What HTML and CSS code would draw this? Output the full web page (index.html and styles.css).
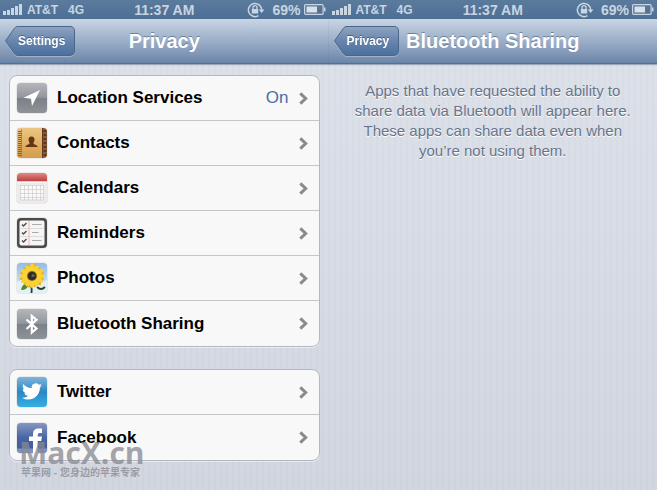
FILE: index.html
```html
<!DOCTYPE html>
<html lang="en">

<head>
  <meta charset="UTF-8">
  <meta name="viewport" content="width=device-width, initial-scale=1">
  <title>Privacy</title>
  <link rel="stylesheet" href="styles.css">
</head>

<body>
  <!-- shared symbols -->
  <svg class="defs" width="0" height="0" aria-hidden="true">
    <defs>
      <linearGradient id="steel" x1="0" y1="0" x2="0" y2="1">
        <stop offset="0" stop-color="#b4b7bb"/>
        <stop offset="0.48" stop-color="#92959b"/>
        <stop offset="0.52" stop-color="#7c8087"/>
        <stop offset="1" stop-color="#8e9299"/>
      </linearGradient>
      <linearGradient id="tan" x1="0" y1="0" x2="0" y2="1">
        <stop offset="0" stop-color="#ecc582"/>
        <stop offset="1" stop-color="#d59c4a"/>
      </linearGradient>
      <linearGradient id="red" x1="0" y1="0" x2="0" y2="1">
        <stop offset="0" stop-color="#e08a86"/>
        <stop offset="1" stop-color="#bd3a3b"/>
      </linearGradient>
      <linearGradient id="sky" x1="0" y1="0" x2="0" y2="1">
        <stop offset="0" stop-color="#8fbdec"/>
        <stop offset="1" stop-color="#e3eff8"/>
      </linearGradient>
      <linearGradient id="tw" x1="0" y1="0" x2="0" y2="1">
        <stop offset="0" stop-color="#7fb4dc"/>
        <stop offset="0.5" stop-color="#2c87c4"/>
        <stop offset="1" stop-color="#35b0e6"/>
      </linearGradient>
      <linearGradient id="fb" x1="0" y1="0" x2="0" y2="1">
        <stop offset="0" stop-color="#8496c2"/>
        <stop offset="0.5" stop-color="#4964a3"/>
        <stop offset="1" stop-color="#3f5a9c"/>
      </linearGradient>
      <linearGradient id="cap" x1="0" y1="0" x2="0" y2="1">
        <stop offset="0" stop-color="#8ea4c1"/>
        <stop offset="0.5" stop-color="#6885ad"/>
        <stop offset="1" stop-color="#4a719f"/>
      </linearGradient>
    </defs>
    <symbol id="signal" viewBox="0 0 20 11">
      <path d="M0 7h3v4H0zM4 6h3v5H4zM8 4h3v7H8zM12 2h3v9h-3zM16 0h3v11h-3z" fill="#c9d5e1"/>
    </symbol>
    <symbol id="lock" viewBox="0 0 18 16">
      <path d="M11.5 13.6A6.6 6.6 0 1 1 14.6 8" fill="none" stroke="#c9d5e1" stroke-width="1.5"/>
      <path d="M11.8 7.5h5.6l-2.8 3.6z" fill="#c9d5e1"/>
      <path d="M6 7V5.600a2 2 0 0 1 4 0V7" fill="none" stroke="#c9d5e1" stroke-width="1.3"/>
      <path d="M4.800 7h6.400v4.500H4.800z" fill="#c9d5e1"/>
    </symbol>
    <symbol id="battery" viewBox="0 0 22 11">
      <rect x="0.600" y="0.600" width="18.500" height="9.800" rx="1" fill="none" stroke="#c9d5e1" stroke-width="1.200"/>
      <path d="M2.500 2.500h10.500v6H2.500z" fill="#d9e2eb"/>
      <path d="M20 3.500h1.500v4H20z" fill="#c9d5e1"/>
    </symbol>
    <symbol id="arrow-cap" viewBox="0 0 13 30">
      <path d="M13 .5C11.500 .5 10.500 1 9.500 2.200L.8 14.500Q.4 15 .8 15.500L9.500 27.800C10.500 29 11.500 29.500 13 29.500z" fill="url(#cap)"/>
      <path d="M13 .5C11.500 .5 10.500 1 9.500 2.200L.8 14.500Q.4 15 .8 15.500L9.500 27.800C10.500 29 11.500 29.500 13 29.500" fill="none" stroke="#4c6688"/>
    </symbol>
    <symbol id="chevron" viewBox="0 0 9 13">
      <path d="M1.300 1.300L6.700 6.500L1.300 11.700" fill="none" stroke="#8a8a8a" stroke-width="3"/>
    </symbol>
    <symbol id="petals" viewBox="-15 -15 30 30">
      <path d="M0-2Q-5-8 0-13.300Q5-8 0-2z"/>
      <path d="M0-2Q-5-8 0-12.300Q5-8 0-2z" transform="rotate(30)"/>
      <path d="M0-2Q-5-8 0-13Q5-8 0-2z" transform="rotate(60)"/>
      <path d="M0-2Q-5-8 0-12.600Q5-8 0-2z" transform="rotate(90)"/>
      <path d="M0-2Q-5-8 0-13Q5-8 0-2z" transform="rotate(120)"/>
      <path d="M0-2Q-5-8 0-12Q5-8 0-2z" transform="rotate(150)"/>
      <path d="M0-2Q-5-8 0-12.500Q5-8 0-2z" transform="rotate(180)"/>
      <path d="M0-2Q-5-8 0-12Q5-8 0-2z" transform="rotate(210)"/>
      <path d="M0-2Q-5-8 0-13Q5-8 0-2z" transform="rotate(240)"/>
      <path d="M0-2Q-5-8 0-12.500Q5-8 0-2z" transform="rotate(270)"/>
      <path d="M0-2Q-5-8 0-13Q5-8 0-2z" transform="rotate(300)"/>
      <path d="M0-2Q-5-8 0-12.500Q5-8 0-2z" transform="rotate(330)"/>
    </symbol>
  </svg>

  <div class="screens">
    <section class="screen">
      <div class="status-bar">
        <div class="status-left">
          <svg width="20" height="11"><use href="#signal"/></svg>
          <span class="carrier">AT&amp;T</span>
          <span class="network">4G</span>
        </div>
        <span class="clock">11:37 AM</span>
        <div class="status-right">
          <svg width="18" height="16"><use href="#lock"/></svg>
          <span class="percent">69%</span>
          <svg width="22" height="11"><use href="#battery"/></svg>
        </div>
      </div>
      <header class="nav-bar">
        <button class="back" type="button">
          <svg width="13" height="30"><use href="#arrow-cap"/></svg>
          <span class="back-text">Settings</span>
        </button>
        <h1 class="title">Privacy</h1>
      </header>

      <main class="content">
        <nav class="group">
          <a class="row" href="#location">
            <svg class="icon" viewBox="0 0 30 30">
              <rect width="30" height="30" fill="url(#steel)"/>
              <path d="M23 7L6.500 14.800L14 15.800L15 23z" fill="#fff"/>
            </svg>
            <span class="label">Location Services</span>
            <span class="value">On</span>
            <svg width="9" height="13"><use href="#chevron"/></svg>
          </a>
          <a class="row" href="#contacts">
            <svg class="icon" viewBox="0 0 30 30">
              <rect width="30" height="30" fill="url(#tan)"/>
              <path d="M25 0h5v30h-5z" fill="#8a5a36"/>
              <path d="M25 0h1v30h-1z" fill="#5e3a1f"/>
              <path d="M28 2v27" stroke="#5a3722" stroke-width="3" stroke-dasharray="2 2"/>
              <path d="M4.500 1v28" stroke="#b98a4a"/>
              <path d="M2.800 3v25" stroke="#6b6558" stroke-width="3.500" stroke-dasharray="1 1"/>
              <path d="M14.500 8.500c2.200 0 3.200 1.500 3 3.600c-.2 1.700-1 2.200-1 3.400c0 1.300 4 1.200 4.200 3.500H8.300c.2-2.300 4.200-2.200 4.200-3.500c0-1.200-.8-1.700-1-3.400c-.2-2.100.8-3.600 3-3.600z" fill="#653615"/>
            </svg>
            <span class="label">Contacts</span>
            <svg width="9" height="13"><use href="#chevron"/></svg>
          </a>
          <a class="row" href="#calendars">
            <svg class="icon" viewBox="0 0 30 30">
              <rect width="30" height="30" fill="#eeecea"/>
              <path d="M0 0h30v8.500H0z" fill="url(#red)"/>
              <path d="M0 9h30" stroke="#fff"/>
              <path d="M3.500 12.500h23v14h-23z" fill="#fafafa"/>
              <path d="M3.500 12v15M7.500 12v15M11.500 12v15M15.500 12v15M19.500 12v15M23.500 12v15M26.500 12v15M3 12.500h24M3 16.500h24M3 20.500h24M3 24.500h24M3 27h24" stroke="#d2d1cf" stroke-width="0.800"/>
            </svg>
            <span class="label">Calendars</span>
            <svg width="9" height="13"><use href="#chevron"/></svg>
          </a>
          <a class="row" href="#reminders">
            <svg class="icon" viewBox="0 0 30 30">
              <rect width="30" height="30" fill="#4b4b4d"/>
              <rect x="2.500" y="2.500" width="25" height="25" rx="2" fill="#f6f5f4"/>
              <path d="M3 10.500h24M3 18.500h24" stroke="#dddcdc"/>
              <path d="M12 3v24" stroke="#f0b4b4"/>
              <path d="M5 6.500l1.500 1.500L9.500 5M5 14.500l1.500 1.500L9.500 13M5 22.500l1.500 1.500L9.500 21" fill="none" stroke="#4c4c4c" stroke-width="1.400"/>
              <path d="M15 6.500h9.500M15 14.500h6.500M15 22.500h9.500" stroke="#aaa"/>
            </svg>
            <span class="label">Reminders</span>
            <svg width="9" height="13"><use href="#chevron"/></svg>
          </a>
          <a class="row" href="#photos">
            <svg class="icon" viewBox="0 0 30 30">
              <rect width="30" height="30" fill="url(#sky)"/>
              <path d="M0 19q6-4 12 0t18-2v13H0z" fill="#e4eff8"/>
              <path d="M14 22q1 4 .5 8M20 24q4 4 8 0" fill="none" stroke="#24451b" stroke-width="1.800"/>
              <path d="M4 27q1-7 7-6q0 6-7 6z" fill="#4b8a2a"/>
              <g transform="translate(0 -2)">
                <use href="#petals" width="30" height="30" fill="#eeb020" transform="rotate(15 15 15)"/>
                <use href="#petals" width="30" height="30" fill="#fbd235"/>
                <circle cx="15" cy="15" r="5" fill="#8a6420"/>
                <circle cx="15" cy="15" r="4" fill="#2f2a25"/>
                <circle cx="16" cy="14.500" r="1.600" fill="#66625c"/>
              </g>
            </svg>
            <span class="label">Photos</span>
            <svg width="9" height="13"><use href="#chevron"/></svg>
          </a>
          <a class="row" href="#bluetooth">
            <svg class="icon" viewBox="0 0 30 30">
              <rect width="30" height="30" fill="url(#steel)"/>
              <path d="M9.500 10.500L19.500 19.500L14.800 23.500V6.800L19.500 10.800L9.500 20" fill="none" stroke="#fff" stroke-width="2.200"/>
            </svg>
            <span class="label">Bluetooth Sharing</span>
            <svg width="9" height="13"><use href="#chevron"/></svg>
          </a>
        </nav>

        <nav class="group">
          <a class="row" href="#twitter">
            <svg class="icon" viewBox="0 0 30 30">
              <rect width="30" height="30" fill="url(#tw)"/>
              <path transform="translate(5 4.500) scale(.83)" fill="#fff" d="M23.950 4.570a10 10 0 0 1-2.820.77 4.960 4.960 0 0 0 2.160-2.720c-.95.550-2 .95-3.130 1.180a4.920 4.920 0 0 0-8.380 4.480C7.690 8.090 4.070 6.130 1.640 3.160a4.820 4.820 0 0 0-.67 2.480c0 1.710.87 3.210 2.190 4.100a4.900 4.900 0 0 1-2.230-.62v.06a4.920 4.920 0 0 0 3.950 4.830 5 5 0 0 1-2.210.08 4.940 4.940 0 0 0 4.600 3.420A9.870 9.870 0 0 1 0 19.540a13.990 13.990 0 0 0 7.560 2.210c9.050 0 14-7.500 14-13.980 0-.21 0-.42-.02-.63a9.940 9.940 0 0 0 2.410-2.570z"/>
            </svg>
            <span class="label">Twitter</span>
            <svg width="9" height="13"><use href="#chevron"/></svg>
          </a>
          <a class="row" href="#facebook">
            <svg class="icon" viewBox="0 0 30 30">
              <rect width="30" height="30" fill="url(#fb)"/>
              <path d="M0 25.500h30V30H0z" fill="#7d93c4"/>
              <path d="M16 30V18h-4v-4.500h4V11q0-5.500 5.500-5.500H25V10h-2.300q-2 0-2 2v1.500h4.200L24.300 18h-3.600v12z" fill="#fff"/>
            </svg>
            <span class="label">Facebook</span>
            <svg width="9" height="13"><use href="#chevron"/></svg>
          </a>
        </nav>
      </main>

      <div class="watermark">
        <span class="watermark-name">MacX.cn</span>
        <span class="watermark-text" lang="zh-CN">苹果网 - 您身边的苹果专家</span>
      </div>
    </section>

    <section class="screen">
      <div class="status-bar">
        <div class="status-left">
          <svg width="20" height="11"><use href="#signal"/></svg>
          <span class="carrier">AT&amp;T</span>
          <span class="network">4G</span>
        </div>
        <span class="clock">11:37 AM</span>
        <div class="status-right">
          <svg width="18" height="16"><use href="#lock"/></svg>
          <span class="percent">69%</span>
          <svg width="22" height="11"><use href="#battery"/></svg>
        </div>
      </div>
      <header class="nav-bar">
        <button class="back" type="button">
          <svg width="13" height="30"><use href="#arrow-cap"/></svg>
          <span class="back-text">Privacy</span>
        </button>
        <h1 class="title">Bluetooth Sharing</h1>
      </header>
      <main class="content">
        <p class="hint">Apps that have requested the ability to share data via Bluetooth will appear here. These apps can share data even when you’re not using them.</p>
      </main>
    </section>
  </div>
</body>

</html>
```

FILE: styles.css
```css
:root {
  --bar-text: #c9d5e1;
  --line: #c3c6cb;
  --value: #4a6ea5;
  --hint: #68748a;
}

* {
  box-sizing: border-box;
}

body {
  margin: 0;
  font-family: "Liberation Sans", Arial, Helvetica, sans-serif;
  color: #000;
}

svg {
  display: block;
  flex: none;
}

.defs {
  position: absolute;
}

.screens {
  display: grid;
  grid-template-columns: 1fr 1fr;
  min-height: 100vh;
  background:
    repeating-linear-gradient(90deg, rgba(255, 255, 255, 0.06) 0 4px, rgba(120, 140, 170, 0.02) 4px 6px),
    linear-gradient(#dce1ea, #cfd4dd);
}

.screen {
  position: relative;
  min-width: 0;
}

/* status bar */
.status-bar {
  display: grid;
  grid-template-columns: 1fr auto 1fr;
  align-items: center;
  height: 19px;
  padding: 0 3px;
  background: linear-gradient(#5b7b9d, #4d6f94);
  color: var(--bar-text);
  font-size: 14px;
  font-weight: bold;
  line-height: 18px;
}

.status-left,
.status-right {
  display: flex;
  align-items: center;
}

.status-left {
  gap: 4px;
  font-size: 12px;
}

.network {
  margin-left: 6px;
}

.status-right {
  justify-content: flex-end;
  gap: 3px;
}

.percent {
  margin-left: 4px;
}

/* navigation bar */
.nav-bar {
  display: grid;
  grid-template-columns: 1fr auto 1fr;
  align-items: center;
  height: 45px;
  padding: 0 5px;
  background: linear-gradient(#c9d5e4, #9aaec8 50%, #7089ab 96%, #6482a9);
  border-bottom: 1px solid #4f709b;
  box-shadow: 0 1px 1px rgba(60, 80, 110, 0.4);
}

.back {
  display: flex;
  justify-self: start;
  padding: 0;
  border: none;
  background: none;
  color: #fff;
  font-family: inherit;
  font-size: 12px;
  font-weight: bold;
  cursor: pointer;
  filter: drop-shadow(0 1px 0 rgba(255, 255, 255, 0.3));
}

.back-text {
  height: 30px;
  padding: 0 9px 0 0;
  border: 1px solid #4c6688;
  border-left: none;
  border-radius: 0 5px 5px 0;
  background: linear-gradient(#8ea4c1, #6885ad 50%, #4a719f);
  line-height: 28px;
  text-shadow: 0 -1px 0 rgba(30, 50, 80, 0.5);
}

.title {
  grid-column: 2;
  margin: 0;
  color: #fff;
  font-size: 20px;
  line-height: 24px;
  text-shadow: 0 -1px 0 rgba(50, 70, 100, 0.5);
  white-space: nowrap;
}

/* grouped lists */
.content {
  display: flex;
  flex-direction: column;
  gap: 22px;
  padding: 11px 9px 24px;
}

.group {
  overflow: hidden;
  border: 1px solid #b3b8c0;
  border-radius: 8px;
  background: #f8f8f8;
  box-shadow: 0 1px 0 rgba(255, 255, 255, 0.5);
}

.row {
  display: flex;
  align-items: center;
  gap: 10px;
  height: 45px;
  padding: 0 11px 0 7px;
  border-bottom: 1px solid var(--line);
  color: inherit;
  font-size: 17px;
  text-decoration: none;
}

.row:last-child {
  border-bottom: none;
}

.icon {
  width: 30px;
  height: 30px;
  border-radius: 4px;
  box-shadow: 0 0 1px rgba(0, 0, 0, 0.6);
}

.label {
  flex: 1;
  font-weight: bold;
}

.value {
  color: var(--value);
}

.hint {
  margin: 0;
  padding: 6px 8px;
  color: var(--hint);
  font-size: 15px;
  line-height: 20px;
  text-align: center;
  text-shadow: 0 1px 0 #fff;
}

/* site mark over the list */
.watermark {
  position: absolute;
  top: 439px;
  left: 19px;
  display: flex;
  flex-direction: column;
  color: rgba(135, 137, 143, 0.75);
  font-weight: bold;
  white-space: nowrap;
  pointer-events: none;
}

.watermark-name {
  font-family: "Open Sans", "Noto Sans", sans-serif;
  font-size: 30px;
  line-height: 28px;
}

.watermark-text {
  padding-left: 2px;
  font-family: "Liberation Sans", "Noto Sans CJK SC", sans-serif;
  font-size: 10px;
  line-height: 12px;
}
```
